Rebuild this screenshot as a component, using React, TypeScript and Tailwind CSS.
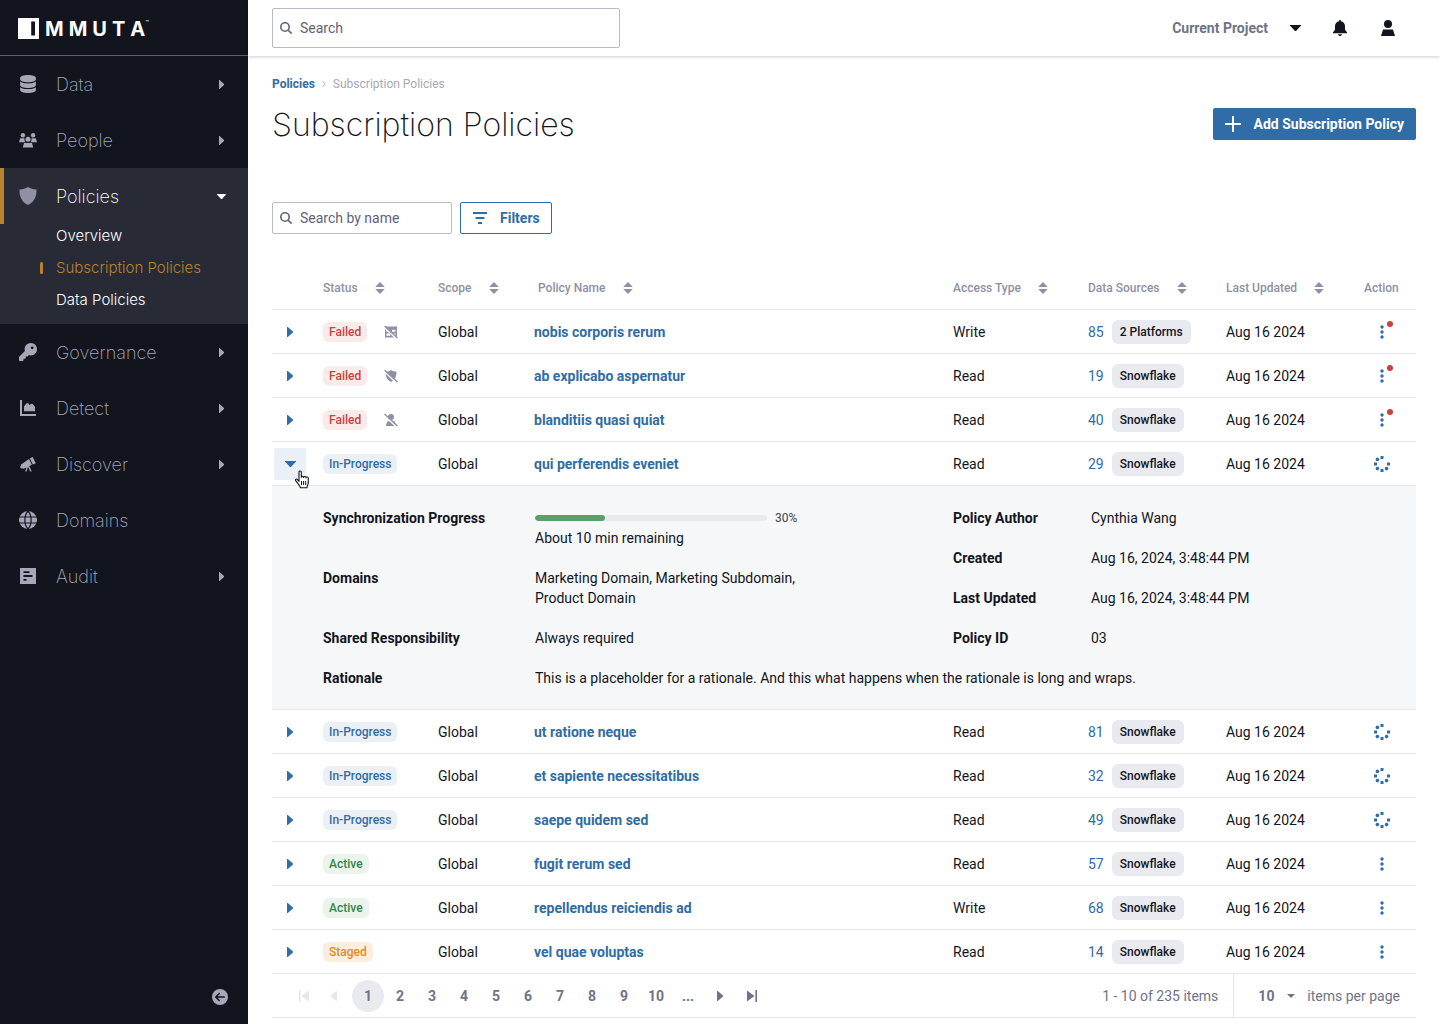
import type { ReactNode } from "react";
import { FaCircleArrowLeft, FaDatabase, FaKey } from "react-icons/fa6";

type Status = "Failed" | "In-Progress" | "Active" | "Staged";
type Issue = "table" | "shield" | "person";

interface Policy {
  name: string;
  status: Status;
  issue?: Issue;
  access: string;
  sources: number;
  platform: string;
  expanded?: boolean;
}

const policies: Policy[] = [
  { name: "nobis corporis rerum", status: "Failed", issue: "table", access: "Write", sources: 85, platform: "2 Platforms" },
  { name: "ab explicabo aspernatur", status: "Failed", issue: "shield", access: "Read", sources: 19, platform: "Snowflake" },
  { name: "blanditiis quasi quiat", status: "Failed", issue: "person", access: "Read", sources: 40, platform: "Snowflake" },
  { name: "qui perferendis eveniet", status: "In-Progress", access: "Read", sources: 29, platform: "Snowflake", expanded: true },
  { name: "ut ratione neque", status: "In-Progress", access: "Read", sources: 81, platform: "Snowflake" },
  { name: "et sapiente necessitatibus", status: "In-Progress", access: "Read", sources: 32, platform: "Snowflake" },
  { name: "saepe quidem sed", status: "In-Progress", access: "Read", sources: 49, platform: "Snowflake" },
  { name: "fugit rerum sed", status: "Active", access: "Read", sources: 57, platform: "Snowflake" },
  { name: "repellendus reiciendis ad", status: "Active", access: "Write", sources: 68, platform: "Snowflake" },
  { name: "vel quae voluptas", status: "Staged", access: "Read", sources: 14, platform: "Snowflake" },
];

const statusStyles: Record<Status, string> = {
  Failed: "bg-[#f9ebea] text-[#c8413b]",
  "In-Progress": "bg-[#eaf0f6] text-[#306ca5]",
  Active: "bg-[#eaf4ec] text-[#35854a]",
  Staged: "bg-[#fceddd] text-[#e58a1f]",
};

function CaretRight({ className = "" }: { className?: string }) {
  return (
    <svg className={className} width="6" height="10" viewBox="0 0 6 10" fill="currentColor" aria-hidden="true">
      <path d="M0 0h.8L6 4.500v1L.8 10H0z" />
    </svg>
  );
}

function CaretDown({ className = "" }: { className?: string }) {
  return (
    <svg className={className} width="11" height="6" viewBox="0 0 11 6" fill="currentColor" aria-hidden="true">
      <path d="M0 0h11v.6L6 6H5L0 .6z" />
    </svg>
  );
}

function SearchIcon() {
  return (
    <svg width="12" height="12" viewBox="0 0 12 12" fill="none" stroke="currentColor" strokeWidth="1.600" aria-hidden="true">
      <circle cx="5" cy="5" r="4.200" />
      <path d="M8 8l3.600 3.600" />
    </svg>
  );
}

function PeopleIcon() {
  return (
    <svg width="18" height="15" viewBox="0 0 18 15" fill="currentColor" aria-hidden="true">
      <circle cx="3.900" cy="2.300" r="2.200" />
      <circle cx="14.100" cy="2.300" r="2.200" />
      <circle cx="9" cy="6.300" r="2.500" />
      <path d="M1.200 5.300h4.200l.2 2.200c.2.8.5 1.300.9 1.700H0zM16.800 5.300h-4.200l-.2 2.200c-.2.8-.5 1.300-.9 1.700H18zM5 10h8l1.200 4.600H3.800z" />
    </svg>
  );
}

function ShieldIcon() {
  return (
    <svg width="18" height="18" viewBox="0 0 18 18" fill="currentColor" aria-hidden="true">
      <path d="M9 0c2.400 1.600 5.200 2.400 8.400 2.600.5 6.400-1.900 12.600-8.400 15.400C2.500 15.200.1 9 .6 2.600 3.800 2.400 6.600 1.600 9 0z" />
    </svg>
  );
}

function AreaChartIcon() {
  return (
    <svg width="16" height="16" viewBox="0 0 16 16" fill="currentColor" aria-hidden="true">
      <path d="M0 0h2v14h14v2H0zM4 11.300V6.500l2.500-3.300h1.700L9.500 5l1.800-1.200h1.200L15 6.800v4.500z" />
    </svg>
  );
}

function TelescopeIcon() {
  return (
    <svg width="16" height="15" viewBox="0 0 16 15" fill="currentColor" aria-hidden="true">
      <path d="M9.800 1.500L12.600.1l3.200 6.200-2.900 1.300zM9 2.100l2.900 5.700-2.600 1.200 2.400 5.400h-1.500L8 9.800 6.600 14.400H5.200l1.300-4-3.700 1.500-.5-.8-1.300.6L0 9.500l1.100-.7-.4-1.100z" />
    </svg>
  );
}

function GlobeIcon() {
  return (
    <svg width="18" height="18" viewBox="0 0 18 18" aria-hidden="true">
      <circle cx="9" cy="9" r="9" fill="currentColor" />
      <path d="M0 6h18M0 12h18M9 0C4.800 4.500 4.800 13.500 9 18M9 0c4.200 4.500 4.200 13.500 0 18" fill="none" stroke="#12151e" strokeWidth="1.200" />
    </svg>
  );
}

function AuditIcon() {
  return (
    <svg width="16" height="16" viewBox="0 0 16 16" fill="currentColor" fillRule="evenodd" aria-hidden="true">
      <path d="M0 0h16v16H0zM3.500 3.300v1.800h6V3.300zM3.500 7.100v1.800h9V7.100zM3.500 10.900v1.800h3v-1.800z" />
    </svg>
  );
}

function SortIcon() {
  return (
    <svg width="10" height="12" viewBox="0 0 10 12" fill="currentColor" aria-hidden="true">
      <path d="M5 0l4.800 5H.2zM5 12L.2 7h9.600z" />
    </svg>
  );
}

function IssueIcon({ kind }: { kind: Issue }) {
  return (
    <svg className="text-[#8e91a5]" width="14" height="14" viewBox="0 0 14 14" fill="currentColor" role="img" aria-label="Policy issue">
      {kind === "table" && (
        <path fillRule="evenodd" d="M1 1.500h12v11H1zM2.500 4.800v2H6v-2zM8 4.800v2h3.500v-2zM2.500 8.500v2.300H6V8.500zM8 8.500v2.300h3.500V8.500z" />
      )}
      {kind === "shield" && <path d="M7 1c1.500 1 3.400 1.500 5.500 1.600.2 4.500-1.300 8.400-5.500 10.400C2.800 11 1.300 7.100 1.500 2.600 3.600 2.500 5.500 2 7 1z" />}
      {kind === "person" && (
        <>
          <circle cx="7" cy="4" r="3" />
          <path d="M3.500 8.300h7l1.800 4.700H1.700z" />
        </>
      )}
      <path d="M-1 1.400l14 13" stroke="#ffffff" strokeWidth="1.500" />
      <path d="M.5 1l13 12" stroke="currentColor" strokeWidth="1.300" />
    </svg>
  );
}

function SpinnerIcon() {
  return (
    <svg width="18" height="18" viewBox="0 0 18 18" fill="currentColor" role="img" aria-label="In progress">
      <path d="M7.500 1h3v3h-3zM7.500 14h3v3h-3zM1 7.500h3v3H1zM14 7.500h3v3h-3z" />
      <circle cx="4.400" cy="4.400" r="1.800" />
      <circle cx="4.400" cy="13.600" r="1.800" />
      <circle cx="13.600" cy="13.600" r="1.800" />
    </svg>
  );
}

function KebabIcon() {
  return (
    <svg width="4" height="14" viewBox="0 0 4 14" fill="currentColor" aria-hidden="true">
      <circle cx="2" cy="2" r="1.700" />
      <circle cx="2" cy="7" r="1.700" />
      <circle cx="2" cy="12" r="1.700" />
    </svg>
  );
}

function HandCursor() {
  return (
    <svg className="pointer-events-none absolute top-[22px] left-5" width="17" height="19" viewBox="0 0 17 19" aria-hidden="true">
      <path
        d="M5 11.500V2.200C5 .5 7.300.5 7.300 2.200v5c0-1.300 2.300-1.300 2.300.2 0-1.300 2.400-1.200 2.400.4 0-1.200 2.300-1.100 2.300.6v4.200c0 1.800-1.300 2.600-1.300 5.100H6.400c0-1.500-1.800-2.800-2.700-4.400L1.700 10.700c-.9-1.500.9-2.200 1.800-1.100z"
        fill="#ffffff"
        stroke="#12151e"
        strokeWidth="1.100"
        strokeLinejoin="round"
      />
      <path d="M7.500 11v4M9.600 11v4M11.700 11v4" stroke="#12151e" strokeWidth="1" />
    </svg>
  );
}

interface NavItem {
  label: string;
  icon: ReactNode;
  arrow?: boolean;
}

const navTop: NavItem[] = [
  { label: "Data", icon: <FaDatabase className="size-[18px]" />, arrow: true },
  { label: "People", icon: <PeopleIcon />, arrow: true },
];

const navBottom: NavItem[] = [
  { label: "Governance", icon: <FaKey className="size-[18px]" />, arrow: true },
  { label: "Detect", icon: <AreaChartIcon />, arrow: true },
  { label: "Discover", icon: <TelescopeIcon />, arrow: true },
  { label: "Domains", icon: <GlobeIcon /> },
  { label: "Audit", icon: <AuditIcon />, arrow: true },
];

function NavRow({ item }: { item: NavItem }) {
  return (
    <button type="button" className="flex h-14 w-full items-center pr-6 pl-4 text-left text-[#a6a8b8]">
      <span className="flex w-6 justify-center">{item.icon}</span>
      <span className="ml-4 flex-1 pt-0.5 text-lg font-extralight">{item.label}</span>
      {item.arrow && (
        <svg width="5" height="9" viewBox="0 0 5 9" fill="currentColor" aria-hidden="true">
          <path d="M0 0h.6L5 4v1L.6 9H0z" />
        </svg>
      )}
    </button>
  );
}

function Sidebar() {
  return (
    <aside className="flex w-[248px] shrink-0 flex-col bg-[#12151e] font-[Inter,sans-serif]">
      <a href="#home" aria-label="Immuta" className="flex h-14 items-center border-b border-[#5b5e6d] pt-px pl-[18px] text-white">
        <svg width="21" height="21" viewBox="0 0 21 21" fill="currentColor" fillRule="evenodd" aria-hidden="true">
          <path d="M0 0h21v21H0zM13.200 3.500v14H17v-14z" />
        </svg>
        <span className="ml-1.5 flex gap-[5px] pt-0.5 text-xl leading-5 font-bold">
          <span>M</span>
          <span>M</span>
          <span>U</span>
          <span>T</span>
          <span>A</span>
        </span>
        <span className="self-start pt-[18px] text-[6px] leading-2">™</span>
      </a>
      <nav className="flex-1">
        {navTop.map((item) => (
          <NavRow key={item.label} item={item} />
        ))}
        <div className="bg-[#282b36] pb-3 text-white">
          <button type="button" className="flex h-14 w-full items-center border-l-4 border-[#b9822f] pr-[22px] pl-3 text-left">
            <span className="flex w-6 justify-center text-[#8e91a5]">
              <ShieldIcon />
            </span>
            <span className="ml-4 flex-1 pt-0.5 text-lg font-extralight">Policies</span>
            <svg width="9" height="5" viewBox="0 0 9 5" fill="currentColor" aria-hidden="true">
              <path d="M0 0h9v.6L5 5H4L0 .6z" />
            </svg>
          </button>
          <ul className="flex flex-col gap-2 pl-14 text-[15px] leading-6 font-light">
            <li>
              <a href="#overview">Overview</a>
            </li>
            <li className="relative text-[#b9822f]">
              <span className="absolute top-1.5 -left-4 h-3 w-[3px] rounded-sm bg-[#b9822f]" />
              <a href="#subscription" aria-current="page">
                Subscription Policies
              </a>
            </li>
            <li>
              <a href="#data-policies">Data Policies</a>
            </li>
          </ul>
        </div>
        {navBottom.map((item) => (
          <NavRow key={item.label} item={item} />
        ))}
      </nav>
      <button type="button" aria-label="Collapse sidebar" className="mr-5 mb-[19px] self-end text-[#a6a8b8]">
        <FaCircleArrowLeft className="size-4" />
      </button>
    </aside>
  );
}

function TopBar() {
  return (
    <header className="flex h-14 items-center justify-between bg-white pr-[45px] pl-6 shadow-[0_1px_3px_rgba(0,0,0,0.2)]">
      <label className="flex h-10 w-[348px] items-center gap-2 rounded-xs border border-[#b9bbc8] px-[7px] text-[#5f6377]">
        <SearchIcon />
        <input aria-label="Search" placeholder="Search" className="min-w-0 flex-1 outline-none placeholder:text-[#5f6377]" />
      </label>
      <div className="flex items-center text-[#12151e]">
        <button type="button" className="flex items-center gap-[22px] font-bold text-[#6f7387]">
          Current Project
          <CaretDown className="text-[#12151e]" />
        </button>
        <button type="button" aria-label="Notifications" className="ml-8">
          <svg width="14" height="16" viewBox="0 0 14 16" fill="currentColor" aria-hidden="true">
            <path d="M6.200 0h1.600v1.200C10.600 1.600 12 3.600 12 6.200v3.600l2 2.400v1H0v-1l2-2.400V6.200c0-2.600 1.400-4.600 4.200-5zM5 14.200h4c-.3 2.400-3.700 2.400-4 0z" />
          </svg>
        </button>
        <button type="button" aria-label="Account" className="ml-[34px]">
          <svg width="14" height="16" viewBox="0 0 14 16" fill="currentColor" aria-hidden="true">
            <circle cx="7" cy="4" r="4" />
            <path d="M2 9.500h10l2 6.500H0z" />
          </svg>
        </button>
      </div>
    </header>
  );
}

function HeaderCell({ label, indent = false }: { label: string; indent?: boolean }) {
  return (
    <th scope="col" className={indent ? "pl-1 text-left" : "text-left"}>
      <button type="button" className="flex items-center gap-[17px] text-xs font-medium">
        {label}
        <SortIcon />
      </button>
    </th>
  );
}

function Field({ label, children }: { label: string; children: ReactNode }) {
  return (
    <div className="flex">
      <dt className="w-[212px] shrink-0 font-bold">{label}</dt>
      <dd>{children}</dd>
    </div>
  );
}

function MetaField({ label, children }: { label: string; children: ReactNode }) {
  return (
    <div className="flex">
      <dt className="w-[138px] shrink-0 font-bold">{label}</dt>
      <dd>{children}</dd>
    </div>
  );
}

function PolicyDetails() {
  return (
    <div className="flex flex-col gap-5 pt-[22px] pb-[21px] pl-[51px]">
      <div className="flex">
        <dl className="flex flex-1 flex-col gap-5">
          <Field label="Synchronization Progress">
            <div className="flex h-5 items-center gap-2 text-xs text-[#3f4250]">
              <div role="progressbar" aria-label="Synchronization progress" aria-valuenow={30} className="h-1.5 w-[232px] overflow-hidden rounded-full bg-[#e9eaef]">
                <div className="h-full rounded-full bg-[#5ca069]" style={{ width: "30%" }} />
              </div>
              30%
            </div>
            About 10 min remaining
          </Field>
          <Field label="Domains">
            <p className="w-[272px]">Marketing Domain, Marketing Subdomain, Product Domain</p>
          </Field>
          <Field label="Shared Responsibility">Always required</Field>
        </dl>
        <dl className="flex w-[463px] flex-col gap-5">
          <MetaField label="Policy Author">Cynthia Wang</MetaField>
          <MetaField label="Created">Aug 16, 2024, 3:48:44 PM</MetaField>
          <MetaField label="Last Updated">Aug 16, 2024, 3:48:44 PM</MetaField>
          <MetaField label="Policy ID">03</MetaField>
        </dl>
      </div>
      <dl>
        <Field label="Rationale">This is a placeholder for a rationale. And this what happens when the rationale is long and wraps.</Field>
      </dl>
    </div>
  );
}

function PolicyRows({ policy }: { policy: Policy }) {
  return (
    <>
      <tr className="h-11 [&>td]:border-b [&>td]:border-[#e6e7eb]">
        <td>
          <div className="relative ml-0.5 size-8">
            <button
              type="button"
              aria-expanded={!!policy.expanded}
              aria-label={`Toggle details for ${policy.name}`}
              className={
                policy.expanded
                  ? "flex size-8 items-center justify-center rounded-xs bg-[#eaf0f6] text-[#306ca5]"
                  : "flex size-8 items-center justify-center text-[#306ca5]"
              }
            >
              {policy.expanded ? <CaretDown /> : <CaretRight />}
            </button>
            {policy.expanded && <HandCursor />}
          </div>
        </td>
        <td>
          <div className="flex items-center gap-[17px]">
            <span className={`rounded-md px-1.5 py-0.5 text-xs font-medium ${statusStyles[policy.status]}`}>{policy.status}</span>
            {policy.issue && <IssueIcon kind={policy.issue} />}
          </div>
        </td>
        <td>Global</td>
        <td>
          <a href="#policy" className="font-bold text-[#306ca5]">
            {policy.name}
          </a>
        </td>
        <td>{policy.access}</td>
        <td>
          <div className="flex items-center gap-2">
            <a href="#sources" className="text-[#306ca5]">
              {policy.sources}
            </a>
            <span className="rounded-md bg-[#e9eaef] px-2 py-1 text-xs font-medium">{policy.platform}</span>
          </div>
        </td>
        <td>Aug 16 2024</td>
        <td>
          <div className="flex w-9 justify-center text-[#306ca5]">
            {policy.status === "In-Progress" ? (
              <SpinnerIcon />
            ) : (
              <button type="button" aria-label={`Actions for ${policy.name}`} className="relative">
                <KebabIcon />
                {policy.issue && <span className="absolute -top-1 left-[7px] size-1.5 rounded-full bg-[#c8413b]" />}
              </button>
            )}
          </div>
        </td>
      </tr>
      {policy.expanded && (
        <tr className="bg-[#f6f7f9]">
          <td colSpan={8} className="border-b border-[#e6e7eb]">
            <PolicyDetails />
          </td>
        </tr>
      )}
    </>
  );
}

function Pagination() {
  return (
    <div className="flex h-11 items-center border-b border-[#e6e7eb] pl-4 text-[#6f7387]">
      <nav aria-label="Pagination" className="flex flex-1 font-bold">
        <button type="button" disabled aria-label="First page" className="flex size-8 items-center justify-center text-[#e6e7ee]">
          <svg width="10" height="12" viewBox="0 0 10 12" fill="currentColor" aria-hidden="true">
            <path d="M0 0h1.600v12H0zM10 .5v11L2.500 6z" />
          </svg>
        </button>
        <button type="button" disabled aria-label="Previous page" className="flex size-8 items-center justify-center pr-1 text-[#e6e7ee]">
          <CaretRight className="rotate-180" />
        </button>
        {["1", "2", "3", "4", "5", "6", "7", "8", "9", "10", "..."].map((page) => (
          <button
            key={page}
            type="button"
            className={page === "1" ? "size-8 rounded-full bg-[#e9eaef]" : "size-8 rounded-full"}
          >
            {page}
          </button>
        ))}
        <button type="button" aria-label="Next page" className="flex size-8 items-center justify-center">
          <CaretRight />
        </button>
        <button type="button" aria-label="Last page" className="flex size-8 items-center justify-center">
          <svg width="10" height="12" viewBox="0 0 10 12" fill="currentColor" aria-hidden="true">
            <path d="M8.400 0H10v12H8.400zM0 .5v11L7.500 6z" />
          </svg>
        </button>
      </nav>
      <span className="pr-[15px]">1 - 10 of 235 items</span>
      <label className="flex h-full items-center border-l border-[#e6e7eb] pr-4 pl-6">
        <span className="relative flex items-center">
          <select className="w-[37px] appearance-none font-bold outline-none" defaultValue="10">
            <option>10</option>
            <option>25</option>
            <option>50</option>
          </select>
          <svg className="pointer-events-none absolute right-0" width="8" height="4" viewBox="0 0 8 4" fill="currentColor" aria-hidden="true">
            <path d="M0 0h8L4 4z" />
          </svg>
        </span>
        <span className="ml-3">items per page</span>
      </label>
    </div>
  );
}

export default function App() {
  return (
    <div className="flex min-h-screen bg-white font-[Roboto,sans-serif] text-sm text-[#12151e]">
      <Sidebar />
      <div className="min-w-0 flex-1">
        <TopBar />
        <main className="px-6 pt-5">
          <nav aria-label="Breadcrumb" className="flex items-center gap-[7px] text-xs text-[#a6a8b8]">
            <a href="#policies" className="font-bold text-[#306ca5]">
              Policies
            </a>
            <svg width="4" height="6" viewBox="0 0 4 6" fill="none" stroke="currentColor" aria-hidden="true">
              <path d="M.5.200L3.200 3 .5 5.800" />
            </svg>
            <span>Subscription Policies</span>
          </nav>
          <div className="mt-4 flex items-end justify-between">
            <h1 className="font-[Inter,sans-serif] text-[32px] leading-[30px] font-extralight">Subscription Policies</h1>
            <button type="button" className="flex h-8 items-center gap-[13px] rounded-xs bg-[#306ca5] px-3 font-bold text-white">
              <svg width="16" height="16" viewBox="0 0 16 16" fill="currentColor" aria-hidden="true">
                <path d="M7 0h2v7h7v2H9v7H7V9H0V7h7z" />
              </svg>
              Add Subscription Policy
            </button>
          </div>
          <div className="mt-[62px] flex gap-2">
            <label className="flex h-8 w-[180px] items-center gap-2 rounded-xs border border-[#b9bbc8] px-[7px] text-[#5f6377]">
              <SearchIcon />
              <input aria-label="Search by name" placeholder="Search by name" className="min-w-0 flex-1 outline-none placeholder:text-[#5f6377]" />
            </label>
            <button type="button" className="flex h-8 items-center gap-[13px] rounded-xs border border-[#306ca5] pr-[11px] pl-3 font-bold text-[#306ca5]">
              <svg width="14" height="12" viewBox="0 0 14 12" fill="currentColor" aria-hidden="true">
                <path d="M0 0h14v2H0zM2.500 5h9v2h-9zM5 10h4v2H5z" />
              </svg>
              Filters
            </button>
          </div>
          <table className="mt-8 w-full table-fixed border-separate border-spacing-0">
            <colgroup>
              <col className="w-[51px]" />
              <col className="w-[115px]" />
              <col className="w-24" />
              <col />
              <col className="w-[135px]" />
              <col className="w-[138px]" />
              <col className="w-[138px]" />
              <col className="w-[52px]" />
            </colgroup>
            <thead>
              <tr className="h-11 text-[#8e91a5] [&>*]:border-b [&>*]:border-[#e6e7eb]">
                <td />
                <HeaderCell label="Status" />
                <HeaderCell label="Scope" />
                <HeaderCell label="Policy Name" indent />
                <HeaderCell label="Access Type" />
                <HeaderCell label="Data Sources" />
                <HeaderCell label="Last Updated" />
                <th scope="col" className="text-left text-xs font-medium">
                  Action
                </th>
              </tr>
            </thead>
            <tbody>
              {policies.map((policy) => (
                <PolicyRows key={policy.name} policy={policy} />
              ))}
            </tbody>
          </table>
          <Pagination />
        </main>
      </div>
    </div>
  );
}
